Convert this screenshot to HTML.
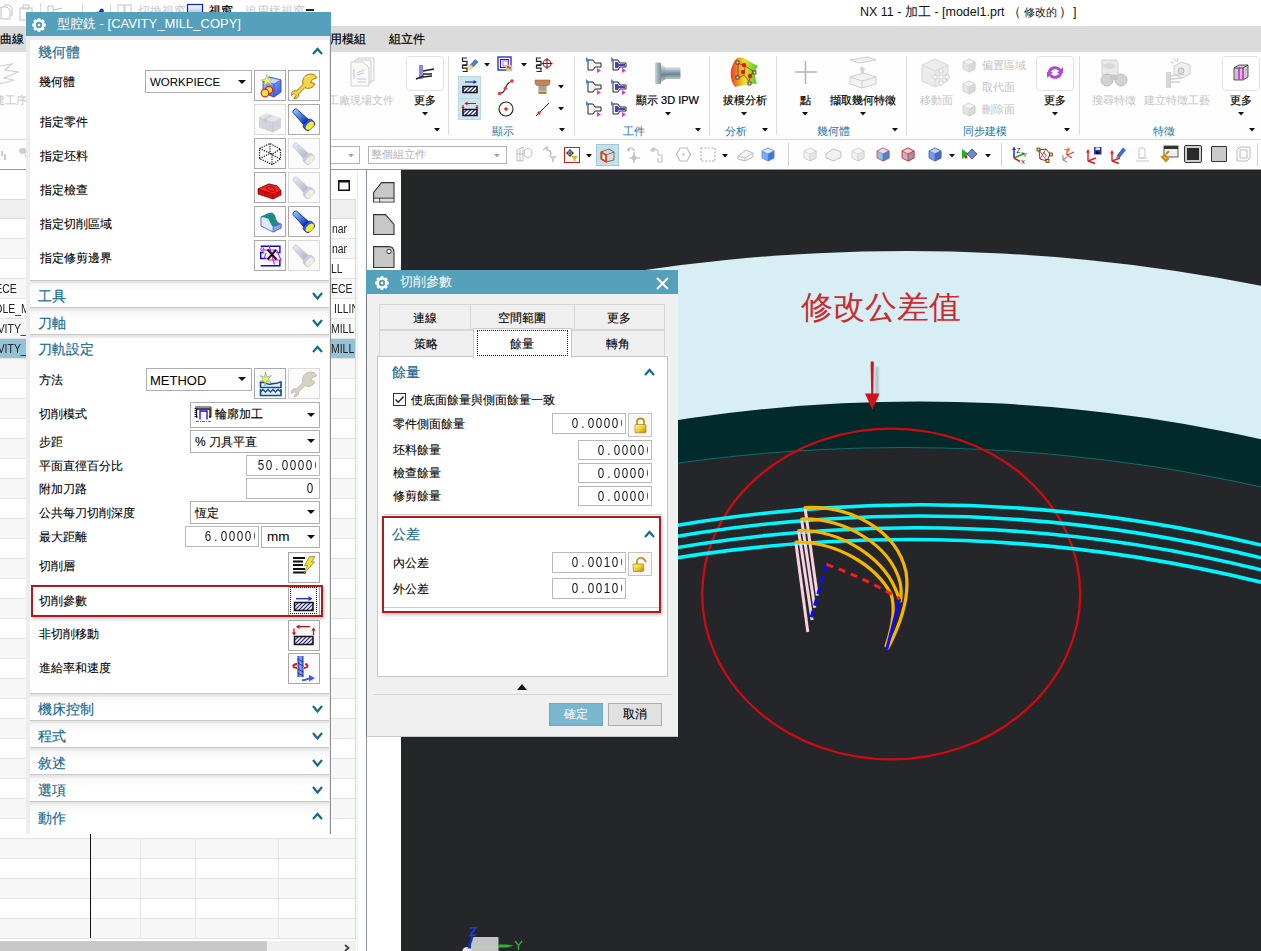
<!DOCTYPE html><html><head><meta charset="utf-8"><style>
*{box-sizing:border-box;margin:0;padding:0}
html,body{width:1261px;height:951px;overflow:hidden;background:#fff;font-family:"Liberation Sans",sans-serif;font-size:12px;color:#222;position:relative}
.a{position:absolute}
.t{position:absolute;white-space:nowrap;line-height:1}
svg{position:absolute;overflow:visible}
.hd{color:#156a90;font-size:13.5px;-webkit-text-stroke:0.15px #156a90}
.lb{font-size:12px;color:#000;-webkit-text-stroke:0.1px #000}
.dd{position:absolute;background:#fff;border:1px solid #adadad}
.tx{position:absolute;background:#fff;border:1px solid #b9b9b9;overflow:hidden}
.tx .cl{position:absolute;left:0;top:0;right:3px;bottom:0;overflow:hidden}.tx .ch{position:absolute;white-space:nowrap;line-height:1;font-size:14.2px;color:#151515}.tx .ch i{font-style:normal;display:inline-block;width:8.05px;text-align:center}.tx .ch i b{font-weight:normal;display:inline-block;transform:scaleX(0.82)}
.ib{position:absolute;width:32px;height:31px;border:1px solid #a9a9a9;background:#fbfbfb}
.ibd{border-color:#dadada}
.tri{position:absolute;width:0;height:0;border-left:4px solid transparent;border-right:4px solid transparent;border-top:4px solid #111}
.sep{position:absolute;background:#d0d0d0}
</style></head><body><svg style="left:0px;top:4px" width="14" height="18" viewBox="0 0 14 18" ><path d="M1 3 L7 3 L10 6 L10 15 L1 15 Z M4 1 L9 1 L12 4 L12 12" fill="none" stroke="#c0c0c0" stroke-width="1"/></svg><svg style="left:19px;top:4px" width="15" height="18" viewBox="0 0 15 18" ><rect x="1" y="4" width="12" height="12" fill="none" stroke="#c4c4c4"/><rect x="4" y="1" width="6" height="4" fill="none" stroke="#c4c4c4"/></svg><div class="a" style="left:40px;top:3px;width:1px;height:18px;background:#d8d8d8"></div><svg style="left:47px;top:4px" width="16" height="16" viewBox="0 0 16 16" ><path d="M1 2 L6 2 L6 14 L1 14 Z M7 6 L15 4 M7 9 L14 9" fill="none" stroke="#bdbdbd"/></svg><div class="a" style="left:82px;top:3px;width:1px;height:18px;background:#d8d8d8"></div><svg style="left:90px;top:4px" width="16" height="12" viewBox="0 0 16 12" ><path d="M1 10 L9 8" stroke="#b08040" stroke-width="1.5"/><path d="M9 9 C9 4 13 3 14 7 L12 10 Z" fill="#2030c0"/></svg><div class="a" style="left:110px;top:3px;width:1px;height:18px;background:#d8d8d8"></div><svg style="left:117px;top:3px" width="16" height="14" viewBox="0 0 16 14" ><rect x="1" y="2" width="6" height="10" fill="none" stroke="#c8c8c8"/><rect x="8" y="2" width="6" height="10" fill="none" stroke="#c8c8c8"/></svg><div class="t " style="left:138px;top:5px;font-size:12px;color:#c8c8c8">切換視窗</div><svg style="left:187px;top:4px" width="17" height="12" viewBox="0 0 17 12" ><rect x="0.5" y="0.5" width="15" height="11" fill="url(#wg)" stroke="#1020d0" stroke-width="1.2"/><defs><linearGradient id="wg" x1="0" y1="0" x2="0" y2="1"><stop offset="0" stop-color="#fff"/><stop offset="1" stop-color="#9ab4e0"/></linearGradient></defs></svg><div class="t " style="left:209px;top:5px;font-size:12px;color:#000;-webkit-text-stroke:0.2px #000">視窗</div><div class="t " style="left:245px;top:5px;font-size:12px;color:#c8c8c8">追用樣視窗</div><div class="a" style="left:306px;top:9px;width:8px;height:2px;background:#222"></div><div class="t " style="left:860px;top:6px;font-size:12.5px;color:#111">NX 11 - 加工 - [model1.prt</div><div class="t " style="left:1008px;top:6px;font-size:12.5px;color:#111">（</div><div class="t " style="left:1024px;top:6px;font-size:11px;color:#111;top:7px">修改的</div><div class="t " style="left:1059px;top:6px;font-size:12.5px;color:#111">）</div><div class="t " style="left:1073px;top:6px;font-size:12.5px;color:#111">]</div><div class="a" style="left:0px;top:26px;width:1261px;height:26px;background:#dbdbdb"></div><div class="t " style="left:0px;top:33px;font-size:12px;color:#000;-webkit-text-stroke:0.2px #000">曲線</div><div class="t " style="left:318px;top:33px;font-size:12px;color:#000;-webkit-text-stroke:0.2px #000">應用模組</div><div class="t " style="left:389px;top:33px;font-size:12px;color:#000;-webkit-text-stroke:0.2px #000">組立件</div><div class="a" style="left:0px;top:52px;width:1261px;height:87px;background:#fefefe"></div><div class="a" style="left:0px;top:139px;width:1261px;height:1px;background:#d9d9d9"></div><svg style="left:0px;top:60px" width="22" height="30" viewBox="0 0 22 30" ><path d="M0 6 L12 4 L5 10 L18 12 L4 18 L14 20 L0 24" fill="none" stroke="#cfcfcf" stroke-width="1.2"/></svg><div class="t " style="left:-6px;top:95px;font-size:11px;color:#c4c4c4">建工序</div><svg style="left:349px;top:57px" width="28" height="31" viewBox="0 0 28 31" ><g fill="#fafafa" stroke="#cdcdcd" stroke-width="1"><path d="M9 1 L25 1 L25 24 L9 24 Z"/><path d="M6 3 L22 3 L22 26 L6 26 Z"/><path d="M2 5 L14 5 L20 11 L20 29 L2 29 Z"/></g><path d="M5 12 L5 22 M8 16 L15 13 M8 18 L15 16 M8 22 L17 22 M8 25 L17 25" stroke="#c8c8d8" stroke-width="1.2"/></svg><div class="t " style="left:328px;top:95px;font-size:11px;color:#c4c4c4">工廠現場文件</div><div class="a" style="left:406px;top:56px;width:38px;height:35px;border:1px solid #e2e2e2;border-radius:4px;background:#fff"></div><svg style="left:412px;top:62px" width="26" height="22" viewBox="0 0 26 22" ><rect x="7" y="3" width="4" height="14" fill="#8a8ae0"/><path d="M4 17 L12 14 M11 9 L22 7 M11 12 L20 12 M11 15 L20 14" stroke="#222" stroke-width="1.5"/></svg><div class="t " style="left:414px;top:95px;font-size:11px;color:#000;-webkit-text-stroke:0.2px #000">更多</div><svg style="left:422px;top:112px" width="6" height="4" viewBox="0 0 6 4" ><path d="M0 0 L6 0 L3 3.5 Z" fill="#111"/></svg><svg style="left:434px;top:128px" width="6" height="4" viewBox="0 0 6 4" ><path d="M0 0 L6 0 L3 3.5 Z" fill="#111"/></svg><div class="a" style="left:448px;top:56px;width:1px;height:79px;background:#dcdcdc"></div><div class="a" style="left:458px;top:76px;width:23px;height:44px;background:#cfe5ee;border:1px solid #b8d8e4"></div><div class="a" style="left:459px;top:98px;width:21px;height:1px;background:#b8d8e4"></div><svg style="left:460px;top:77px" width="20" height="20" viewBox="0 0 20 20" ><rect x="3" y="9.5" width="14" height="6" fill="#fff"/><clipPath id="hc3"><rect x="3" y="9.5" width="14" height="6"/></clipPath><path d="M-3 15.5 L3 9.5M1 15.5 L7 9.5M5 15.5 L11 9.5M9 15.5 L15 9.5M13 15.5 L19 9.5M17 15.5 L23 9.5M21 15.5 L27 9.5" stroke="#2a2a90" stroke-width="1.1" clip-path="url(#hc3)"/><rect x="3" y="9.5" width="14" height="6" fill="none" stroke="#111" stroke-width="1.5"/><path d="M5 5 L15 5" stroke="#1a2ad0" stroke-width="1.2"/><path d="M13.5 3 L17 5 L13.5 7 Z" fill="#1a2ad0"/></svg><svg style="left:460px;top:99px" width="20" height="20" viewBox="0 0 20 20" ><rect x="3" y="10.5" width="14" height="6" fill="#fff"/><clipPath id="hc4"><rect x="3" y="10.5" width="14" height="6"/></clipPath><path d="M-3 16.5 L3 10.5M1 16.5 L7 10.5M5 16.5 L11 10.5M9 16.5 L15 10.5M13 16.5 L19 10.5M17 16.5 L23 10.5M21 16.5 L27 10.5" stroke="#2a2a90" stroke-width="1.1" clip-path="url(#hc4)"/><rect x="3" y="10.5" width="14" height="6" fill="none" stroke="#111" stroke-width="1.5"/><path d="M6 4.5 L16 4.5 M3 6 L3 9 M17 6 L17 9" stroke="#d01010" stroke-width="1.2"/><path d="M4.5 4.5 L7.5 2.5 L7.5 6.5 Z M1.3 8 L3 10.5 L4.7 8 Z M15.3 8 L17 10.5 L18.7 8 Z" fill="#d01010"/></svg><svg style="left:461px;top:57px" width="18" height="16" viewBox="0 0 18 16" ><path d="M6 1 L1.5 1 L1.5 4.3 L6 4.3 L6 7.8 L1.5 7.8 M6 8.3 L1.5 8.3 L1.5 11.2 L6 11.2 L6 14.5 L1.5 14.5" fill="none" stroke="#222" stroke-width="1.2"/><path d="M8 9.5 L14 2.5 L17 5 L10.5 11.5 Z" fill="#4a80e0" stroke="#2040a0" stroke-width="0.5"/><ellipse cx="9.5" cy="10.5" rx="2.2" ry="2.6" transform="rotate(45 9.5 10.5)" fill="#e8e070"/></svg><svg style="left:484px;top:63px" width="6" height="4" viewBox="0 0 6 4" ><path d="M0 0 L6 0 L3 3.5 Z" fill="#111"/></svg><svg style="left:497px;top:56px" width="17" height="17" viewBox="0 0 17 17" ><rect x="1" y="1" width="13" height="13" fill="none" stroke="#2020c0" stroke-width="1.3"/><rect x="3.5" y="3.5" width="8" height="8" fill="none" stroke="#2020c0"/><rect x="6" y="5" width="5" height="5" fill="#fff" stroke="#d060d0"/><circle cx="12" cy="12" r="3.5" fill="#e0c090"/><circle cx="11" cy="11" r="1" fill="#e02020"/><circle cx="13" cy="12" r="1" fill="#20a020"/></svg><svg style="left:521px;top:63px" width="6" height="4" viewBox="0 0 6 4" ><path d="M0 0 L6 0 L3 3.5 Z" fill="#111"/></svg><svg style="left:535px;top:57px" width="18" height="16" viewBox="0 0 18 16" ><path d="M6 1 L1.5 1 L1.5 4.3 L6 4.3 L6 7.8 L1.5 7.8 M6 8.3 L1.5 8.3 L1.5 11.2 L6 11.2 L6 14.5 L1.5 14.5" fill="none" stroke="#222" stroke-width="1.2"/><circle cx="12" cy="6.5" r="3.8" fill="none" stroke="#e01010" stroke-width="1.2"/><path d="M12 1 L12 12 M6.5 6.5 L17.5 6.5" stroke="#333" stroke-width="1"/></svg><svg style="left:497px;top:79px" width="18" height="17" viewBox="0 0 18 17" ><path d="M2.5 14.5 C5 14.5 7 13 8 10 C9 7 10 3.5 15 2" fill="none" stroke="#333" stroke-width="1.2"/><circle cx="2.5" cy="14.5" r="1.8" fill="#e04040"/><circle cx="8.3" cy="9.5" r="1.8" fill="#e04040"/><circle cx="15" cy="2" r="1.8" fill="#e04040"/></svg><svg style="left:534px;top:79px" width="17" height="17" viewBox="0 0 17 17" ><path d="M1 1 L16 1 L16 3 C16 6 14 7 12 7 L5 7 C3 7 1 6 1 3 Z" fill="#c8825a" stroke="#8a5030" stroke-width="0.5"/><rect x="4.5" y="7" width="8" height="6" fill="#a0a0a0"/><rect x="4.5" y="11.5" width="8" height="2" fill="#f0c020"/><rect x="4.5" y="13.5" width="8" height="1" fill="#222"/></svg><svg style="left:558px;top:85px" width="6" height="4" viewBox="0 0 6 4" ><path d="M0 0 L6 0 L3 3.5 Z" fill="#111"/></svg><svg style="left:498px;top:101px" width="17" height="17" viewBox="0 0 17 17" ><circle cx="8" cy="8" r="7" fill="none" stroke="#222" stroke-width="1.1"/><path d="M8 5.5 L9 7 L10.5 8 L9 9 L8 10.5 L7 9 L5.5 8 L7 7 Z" fill="#e03030"/></svg><svg style="left:535px;top:101px" width="16" height="17" viewBox="0 0 16 17" ><path d="M1 15 L14 2" stroke="#333" stroke-width="1"/><circle cx="4" cy="12" r="1.7" fill="#e03030"/></svg><svg style="left:558px;top:107px" width="6" height="4" viewBox="0 0 6 4" ><path d="M0 0 L6 0 L3 3.5 Z" fill="#111"/></svg><div class="t " style="left:492px;top:126px;font-size:11px;color:#1f76a0">顯示</div><svg style="left:559px;top:128px" width="6" height="4" viewBox="0 0 6 4" ><path d="M0 0 L6 0 L3 3.5 Z" fill="#111"/></svg><div class="a" style="left:574px;top:56px;width:1px;height:79px;background:#dcdcdc"></div><svg style="left:586px;top:57px" width="16" height="16" viewBox="0 0 16 16" ><path d="M2 3 L7 3 L9 6 L15 6 L15 10 L9 10 L7 13 L2 13 Z" fill="#fff" stroke="#222" stroke-width="1"/>
<path d="M4 5 L7 5 L8 7 L14 7 L14 9 L8 9 L7 11 L4 11 Z" fill="#e8e8e8" opacity="0.6"/>
<path d="M0 0 L3 2.5 L0 5 Z" fill="#3a90d8"/><path d="M11 11 L15 13.5 L11 16 Z" fill="#d040d8"/></svg><svg style="left:611px;top:57px" width="16" height="16" viewBox="0 0 16 16" ><path d="M2 3 L7 3 L9 6 L15 6 L15 10 L9 10 L7 13 L2 13 Z" fill="#fff" stroke="#222" stroke-width="1"/>
<path d="M4 5 L7 5 L8 7 L14 7 L14 9 L8 9 L7 11 L4 11 Z" fill="#4a3fb8" opacity="1"/>
<path d="M0 0 L3 2.5 L0 5 Z" fill="#3a90d8"/><path d="M11 11 L15 13.5 L11 16 Z" fill="#d040d8"/></svg><svg style="left:586px;top:79px" width="16" height="16" viewBox="0 0 16 16" ><path d="M2 3 L7 3 L9 6 L15 6 L15 10 L9 10 L7 13 L2 13 Z" fill="#fff" stroke="#222" stroke-width="1"/>
<path d="M4 5 L7 5 L8 7 L14 7 L14 9 L8 9 L7 11 L4 11 Z" fill="#e8e8e8" opacity="0.6"/>
<path d="M0 0 L3 2.5 L0 5 Z" fill="#3a90d8"/><path d="M11 11 L15 13.5 L11 16 Z" fill="#d040d8"/></svg><svg style="left:611px;top:79px" width="16" height="16" viewBox="0 0 16 16" ><path d="M2 3 L7 3 L9 6 L15 6 L15 10 L9 10 L7 13 L2 13 Z" fill="#fff" stroke="#222" stroke-width="1"/>
<path d="M4 5 L7 5 L8 7 L14 7 L14 9 L8 9 L7 11 L4 11 Z" fill="#4a3fb8" opacity="1"/>
<path d="M0 0 L3 2.5 L0 5 Z" fill="#3a90d8"/><path d="M11 11 L15 13.5 L11 16 Z" fill="#d040d8"/></svg><svg style="left:586px;top:101px" width="16" height="16" viewBox="0 0 16 16" ><path d="M2 3 L7 3 L9 6 L15 6 L15 10 L9 10 L7 13 L2 13 Z" fill="#fff" stroke="#222" stroke-width="1"/>
<path d="M4 5 L7 5 L8 7 L14 7 L14 9 L8 9 L7 11 L4 11 Z" fill="#e8e8e8" opacity="0.6"/>
<path d="M0 0 L3 2.5 L0 5 Z" fill="#3a90d8"/><path d="M11 11 L15 13.5 L11 16 Z" fill="#d040d8"/></svg><svg style="left:611px;top:101px" width="16" height="16" viewBox="0 0 16 16" ><path d="M2 3 L7 3 L9 6 L15 6 L15 10 L9 10 L7 13 L2 13 Z" fill="#fff" stroke="#222" stroke-width="1"/>
<path d="M4 5 L7 5 L8 7 L14 7 L14 9 L8 9 L7 11 L4 11 Z" fill="#4a3fb8" opacity="1"/>
<path d="M0 0 L3 2.5 L0 5 Z" fill="#3a90d8"/><path d="M11 11 L15 13.5 L11 16 Z" fill="#d040d8"/></svg><svg style="left:654px;top:62px" width="28" height="23" viewBox="0 0 28 23" ><defs><linearGradient id="ipw" x1="0" y1="0" x2="0" y2="1"><stop offset="0" stop-color="#e4eaee"/><stop offset=".35" stop-color="#9aacb6"/><stop offset=".6" stop-color="#6e828e"/><stop offset="1" stop-color="#b8c6ce"/></linearGradient><linearGradient id="ipw2" x1="0" y1="0" x2="1" y2="0"><stop offset="0" stop-color="#c8d4da"/><stop offset="1" stop-color="#7a8c96"/></linearGradient></defs><rect x="1" y="0.5" width="6" height="21.5" rx="1.5" fill="url(#ipw2)"/><path d="M7 2.5 L12 5.5 L12 17 L7 20 Z" fill="url(#ipw)"/><rect x="11.5" y="5" width="15" height="12" rx="1.5" fill="url(#ipw)"/></svg><div class="t " style="left:636px;top:95px;font-size:11px;color:#000;-webkit-text-stroke:0.2px #000">顯示 3D IPW</div><svg style="left:665px;top:112px" width="6" height="4" viewBox="0 0 6 4" ><path d="M0 0 L6 0 L3 3.5 Z" fill="#111"/></svg><div class="t " style="left:623px;top:126px;font-size:11px;color:#1f76a0">工件</div><svg style="left:695px;top:128px" width="6" height="4" viewBox="0 0 6 4" ><path d="M0 0 L6 0 L3 3.5 Z" fill="#111"/></svg><div class="a" style="left:709px;top:56px;width:1px;height:79px;background:#dcdcdc"></div><svg style="left:727px;top:56px" width="34" height="34" viewBox="0 0 34 34" ><defs><linearGradient id="dr" x1="0" y1="0" x2="1" y2="0"><stop offset="0" stop-color="#e84020"/><stop offset=".5" stop-color="#f0e020"/><stop offset="1" stop-color="#30d030"/></linearGradient></defs><path d="M10 2 C16 0 20 4 25 7 L31 10 C26 16 28 22 30 28 C22 27 14 30 8 31 C2 24 2 10 10 2 Z" fill="url(#dr)"/><path d="M11 7 L18 10 L17 19 L11 22 Z M18 10 L26 15 L22 25 L17 19" fill="none" stroke="#b02040" stroke-width="0.8"/><circle cx="17" cy="9" r="2.2" fill="#d02020"/><circle cx="16" cy="16" r="2.2" fill="#d02020"/><circle cx="23" cy="20" r="2.2" fill="#d02020"/><g fill="#f6f030" stroke="#402070" stroke-width="0.8"><rect x="9" y="5" width="3" height="3"/><rect x="9" y="20" width="3" height="3"/><rect x="26" y="15" width="3" height="3"/><rect x="21" y="26" width="3" height="3"/></g></svg><div class="t " style="left:723px;top:95px;font-size:11px;color:#000;-webkit-text-stroke:0.2px #000">拔模分析</div><svg style="left:741px;top:112px" width="6" height="4" viewBox="0 0 6 4" ><path d="M0 0 L6 0 L3 3.5 Z" fill="#111"/></svg><div class="t " style="left:725px;top:126px;font-size:11px;color:#1f76a0">分析</div><svg style="left:762px;top:128px" width="6" height="4" viewBox="0 0 6 4" ><path d="M0 0 L6 0 L3 3.5 Z" fill="#111"/></svg><div class="a" style="left:776px;top:56px;width:1px;height:79px;background:#dcdcdc"></div><svg style="left:794px;top:60px" width="24" height="25" viewBox="0 0 24 25" ><path d="M11.5 1 L11.5 24 M1 12 L23 12" stroke="#b4b4b4" stroke-width="1.6"/></svg><div class="t " style="left:800px;top:95px;font-size:11px;color:#000;-webkit-text-stroke:0.2px #000">點</div><svg style="left:802px;top:112px" width="6" height="4" viewBox="0 0 6 4" ><path d="M0 0 L6 0 L3 3.5 Z" fill="#111"/></svg><svg style="left:848px;top:56px" width="30" height="33" viewBox="0 0 30 33" ><path d="M2 4 L20 1 L28 4 L11 7 Z" fill="#f0f0f0" stroke="#d0d0d0"/><path d="M14 10 L11 14 L13 14 L13 19 L16 19 L16 14 L18 14 Z" fill="#d4d4d4"/><path d="M2 21 L16 17 L28 21 L28 28 L14 32 L2 28 Z" fill="#f2f2f2" stroke="#cfcfcf"/><path d="M2 21 L14 25 L28 21 M14 25 L14 32" fill="none" stroke="#d0d0d0"/></svg><div class="t " style="left:830px;top:95px;font-size:11px;color:#000;-webkit-text-stroke:0.2px #000">擷取幾何特徵</div><svg style="left:860px;top:112px" width="6" height="4" viewBox="0 0 6 4" ><path d="M0 0 L6 0 L3 3.5 Z" fill="#111"/></svg><div class="t " style="left:817px;top:126px;font-size:11px;color:#1f76a0">幾何體</div><svg style="left:892px;top:128px" width="6" height="4" viewBox="0 0 6 4" ><path d="M0 0 L6 0 L3 3.5 Z" fill="#111"/></svg><div class="a" style="left:906px;top:56px;width:1px;height:79px;background:#dcdcdc"></div><svg style="left:919px;top:57px" width="32" height="32" viewBox="0 0 32 32" ><path d="M3 8 L16 2 L29 8 L29 24 L16 30 L3 24 Z" fill="#ececec" stroke="#d6d6d6"/><path d="M3 8 L16 14 L29 8 M16 14 L16 30" fill="none" stroke="#dadada"/><path d="M22 11 L25 15 L23 15 L23 19 L27 19 L27 17 L31 20 L27 23 L27 21 L23 21 L23 25 L25 25 L22 29 L19 25 L21 25 L21 21 L17 21 L17 23 L13 20 L17 17 L17 19 L21 19 L21 15 L19 15 Z" fill="#fff" stroke="#cfcfcf"/></svg><div class="t " style="left:920px;top:95px;font-size:11px;color:#c4c4c4">移動面</div><svg style="left:961px;top:57px" width="16" height="16" viewBox="0 0 16 16" ><path d="M2 5 L8 2 L14 5 L14 12 L8 15 L2 12 Z" fill="#e4e4e4" stroke="#cfcfcf" stroke-width="0.8"/>
<path d="M2 5 L8 2 L14 5 L8 8 Z" fill="#f2f2f2" stroke="#cfcfcf" stroke-width="0.6"/>
<path d="M8 8 L14 5 L14 12 L8 15 Z" fill="#dadada" stroke="#cfcfcf" stroke-width="0.6"/></svg><div class="t " style="left:982px;top:60px;font-size:11px;color:#c4c4c4">偏置區域</div><svg style="left:961px;top:79px" width="16" height="16" viewBox="0 0 16 16" ><path d="M2 5 L8 2 L14 5 L14 12 L8 15 L2 12 Z" fill="#e4e4e4" stroke="#cfcfcf" stroke-width="0.8"/>
<path d="M2 5 L8 2 L14 5 L8 8 Z" fill="#f2f2f2" stroke="#cfcfcf" stroke-width="0.6"/>
<path d="M8 8 L14 5 L14 12 L8 15 Z" fill="#dadada" stroke="#cfcfcf" stroke-width="0.6"/></svg><div class="t " style="left:982px;top:82px;font-size:11px;color:#c4c4c4">取代面</div><svg style="left:961px;top:101px" width="16" height="16" viewBox="0 0 16 16" ><path d="M2 5 L8 2 L14 5 L14 12 L8 15 L2 12 Z" fill="#e4e4e4" stroke="#cfcfcf" stroke-width="0.8"/>
<path d="M2 5 L8 2 L14 5 L8 8 Z" fill="#f2f2f2" stroke="#cfcfcf" stroke-width="0.6"/>
<path d="M8 8 L14 5 L14 12 L8 15 Z" fill="#dadada" stroke="#cfcfcf" stroke-width="0.6"/></svg><div class="t " style="left:982px;top:104px;font-size:11px;color:#c4c4c4">刪除面</div><div class="t " style="left:963px;top:126px;font-size:11px;color:#1f76a0">同步建模</div><div class="a" style="left:1036px;top:56px;width:38px;height:35px;border:1px solid #e2e2e2;border-radius:4px;background:#fff"></div><svg style="left:1045px;top:63px" width="20" height="18" viewBox="0 0 20 18" ><path d="M3 9 C3 3 12 1 16 6 L18 4 L18 10 L12 10 L14 8 C11 5 7 6 6 9 Z M17 10 C17 16 8 18 4 13 L2 15 L2 9 L8 9 L6 11 C9 14 13 13 14 10 Z" fill="#b04ad8"/></svg><div class="t " style="left:1044px;top:95px;font-size:11px;color:#000;-webkit-text-stroke:0.2px #000">更多</div><svg style="left:1052px;top:112px" width="6" height="4" viewBox="0 0 6 4" ><path d="M0 0 L6 0 L3 3.5 Z" fill="#111"/></svg><svg style="left:1064px;top:128px" width="6" height="4" viewBox="0 0 6 4" ><path d="M0 0 L6 0 L3 3.5 Z" fill="#111"/></svg><div class="a" style="left:1079px;top:56px;width:1px;height:79px;background:#dcdcdc"></div><svg style="left:1096px;top:57px" width="33" height="32" viewBox="0 0 33 32" ><path d="M6 3 L20 3 L22 6 L22 18 L6 18 Z" fill="#eaeaea" stroke="#cfcfcf"/><ellipse cx="13" cy="9" rx="6" ry="3" fill="#d8d8d8"/><circle cx="11" cy="23" r="6" fill="#d2d2d2" stroke="#bdbdbd"/><circle cx="25" cy="23" r="6" fill="#d2d2d2" stroke="#bdbdbd"/><rect x="14" y="18" width="8" height="5" fill="#c8c8c8"/></svg><div class="t " style="left:1092px;top:95px;font-size:11px;color:#c4c4c4">搜尋特徵</div><svg style="left:1160px;top:56px" width="34" height="33" viewBox="0 0 34 33" ><path d="M14 10 L22 6 L30 9 L30 18 L22 22 L14 18 Z" fill="#efefef" stroke="#cfcfcf"/><circle cx="21" cy="15" r="3" fill="#dcdcdc" stroke="#bcbcbc"/><path d="M14 2 L16 6 M10 6 L14 7 M18 2 L17 6" stroke="#cfcfcf"/><rect x="6" y="16" width="5" height="16" fill="#d6d6d6"/><path d="M10 20 L24 18 M10 23 L22 22 M10 26 L20 26" stroke="#d0d0d0" stroke-width="1.3"/></svg><div class="t " style="left:1144px;top:95px;font-size:11px;color:#c4c4c4">建立特徵工藝</div><div class="t " style="left:1153px;top:126px;font-size:11px;color:#1f76a0">特徵</div><div class="a" style="left:1222px;top:56px;width:38px;height:35px;border:1px solid #e2e2e2;border-radius:4px;background:#fff"></div><svg style="left:1231px;top:64px" width="20" height="18" viewBox="0 0 20 18" ><path d="M3 4 L8 1 L17 1 L17 13 L12 16 L3 16 Z" fill="#c8c8c8" stroke="#333" stroke-width="0.8"/><path d="M8 4 L8 16 M12 4 L12 16" stroke="#e020e0" stroke-width="1.6"/><path d="M3 4 L12 4 L17 1" fill="none" stroke="#333" stroke-width="0.8"/></svg><div class="t " style="left:1230px;top:95px;font-size:11px;color:#000;-webkit-text-stroke:0.2px #000">更多</div><svg style="left:1238px;top:112px" width="6" height="4" viewBox="0 0 6 4" ><path d="M0 0 L6 0 L3 3.5 Z" fill="#111"/></svg><svg style="left:1249px;top:128px" width="6" height="4" viewBox="0 0 6 4" ><path d="M0 0 L6 0 L3 3.5 Z" fill="#111"/></svg><div class="a" style="left:0px;top:140px;width:1261px;height:29px;background:#fefefe"></div><div class="a" style="left:0px;top:169px;width:1261px;height:1px;background:#8e9a9e"></div><svg style="left:0px;top:146px" width="12" height="18" viewBox="0 0 12 18" ><path d="M2 5 L2 10 M5 8 L5 14" stroke="#c8c8c8" stroke-width="2"/></svg><svg style="left:17px;top:146px" width="18" height="18" viewBox="0 0 18 18" ><ellipse cx="6" cy="5" rx="4" ry="3" fill="#d0d0d0"/><path d="M8 9 L12 13 L12 16" stroke="#bdbdbd" stroke-width="1.3" fill="none"/></svg><div class="a" style="left:300px;top:146px;width:60px;height:18px;border:1px solid #b4b4b4;background:#fff"></div><svg style="left:348px;top:154px" width="6" height="4" viewBox="0 0 6 4" ><path d="M0 0 L6 0 L3 3.5 Z" fill="#a8a8a8"/></svg><div class="a" style="left:368px;top:146px;width:139px;height:18px;border:1px solid #b4b4b4;background:#fff"></div><div class="t " style="left:371px;top:149px;font-size:11px;color:#b4b4b4">整個組立件</div><svg style="left:494px;top:154px" width="6" height="4" viewBox="0 0 6 4" ><path d="M0 0 L6 0 L3 3.5 Z" fill="#a8a8a8"/></svg><svg style="left:516px;top:146px" width="18" height="17" viewBox="0 0 18 17" ><path d="M1 4 L7 1 L7 15 L1 15 Z M4 4 L4 15 M1 8 L7 8" fill="none" stroke="#bcbcbc" stroke-width="1"/><ellipse cx="12" cy="7" rx="4" ry="4.5" fill="none" stroke="#c4c4c4" stroke-width="1.2"/></svg><svg style="left:541px;top:146px" width="17" height="17" viewBox="0 0 17 17" ><path d="M2 4 L6 1 L6 4 C10 4 11 8 9 10" fill="none" stroke="#c0c0c0" stroke-width="1.5"/><path d="M8 10 L16 10 L13 13 L13 16 L11 16 L11 13 Z" fill="#cfcfcf"/></svg><div class="a" style="left:564px;top:147px;width:16px;height:16px;border:1px solid #d02020;background:#fff"></div><svg style="left:565px;top:148px" width="14" height="14" viewBox="0 0 14 14" ><circle cx="5" cy="5" r="2.5" fill="none" stroke="#222" stroke-width="0.9"/><path d="M5 1 L5 9 M1 5 L9 5" stroke="#222" stroke-width="0.9"/><path d="M6 8 L13 8 L10.5 11 L10.5 13 L8.5 13 L8.5 11 Z" fill="#f0b020"/></svg><svg style="left:586px;top:154px" width="6" height="4" viewBox="0 0 6 4" ><path d="M0 0 L6 0 L3 3.5 Z" fill="#111"/></svg><div class="a" style="left:596px;top:144px;width:23px;height:22px;background:#c5e0ea;border:1px solid #9ccbdc"></div><svg style="left:599px;top:147px" width="17" height="16" viewBox="0 0 17 16" ><path d="M2 5 L10 2 L15 5 L15 13 L7 15 L2 12 Z" fill="#dadada" stroke="#444" stroke-width="0.7"/><path d="M2 5 L7 8 L15 5 M7 8 L7 15" fill="none" stroke="#444" stroke-width="0.7"/><path d="M2.5 5.5 L7 8 L7 14.5 L2.5 12 Z" fill="#fff" stroke="#e04010" stroke-width="1.8"/></svg><svg style="left:625px;top:146px" width="17" height="18" viewBox="0 0 17 18" ><path d="M3 5 C3 1 9 1 9 5" fill="none" stroke="#b8b8b8" stroke-width="1.2"/><path d="M2 3 L4 6 L5 2 Z" fill="#b8b8b8"/><path d="M9 6 L9 17 M4 12 L15 12" stroke="#b8b8b8" stroke-width="1.2"/><circle cx="9" cy="12" r="2" fill="none" stroke="#b8b8b8"/></svg><svg style="left:649px;top:146px" width="16" height="18" viewBox="0 0 16 18" ><path d="M1 5 L5 2 L9 5 L9 9 L13 9 L13 16 L9 16 L9 12" fill="none" stroke="#c0c0c0" stroke-width="1.1"/><circle cx="4" cy="4" r="2" fill="#c8c8c8"/></svg><svg style="left:676px;top:147px" width="15" height="15" viewBox="0 0 15 15" ><path d="M4 1 L11 1 L14.5 7.5 L11 14 L4 14 L0.5 7.5 Z" fill="none" stroke="#bcbcbc" stroke-width="1.2"/><circle cx="7.5" cy="7.5" r="1" fill="#aaa"/></svg><svg style="left:700px;top:147px" width="16" height="16" viewBox="0 0 16 16" ><rect x="1" y="1" width="14" height="13" fill="none" stroke="#b0b0b0" stroke-width="1.2" stroke-dasharray="2 1.5"/></svg><svg style="left:722px;top:154px" width="6" height="4" viewBox="0 0 6 4" ><path d="M0 0 L6 0 L3 3.5 Z" fill="#111"/></svg><svg style="left:737px;top:147px" width="17" height="15" viewBox="0 0 17 15" ><path d="M1 9 L9 3 L16 6 L16 10 L8 14 L1 12 Z" fill="#f4f4f4" stroke="#bdbdbd"/><path d="M1 9 L8 11 L16 6 M8 11 L8 14" fill="none" stroke="#c4c4c4"/></svg><svg style="left:760px;top:146px" width="17" height="17" viewBox="0 0 17 17" ><path d="M2 5 L8 2 L14 5 L14 12 L8 15 L2 12 Z" fill="#7ab0f0" stroke="#5a8ad8" stroke-width="0.8"/>
<path d="M2 5 L8 2 L14 5 L8 8 Z" fill="#d9ecff" stroke="#5a8ad8" stroke-width="0.6"/>
<path d="M8 8 L14 5 L14 12 L8 15 Z" fill="#3a7ad8" stroke="#5a8ad8" stroke-width="0.6"/></svg><div class="a" style="left:788px;top:143px;width:1px;height:23px;background:#d0d0d0"></div><svg style="left:802px;top:146px" width="16" height="16" viewBox="0 0 16 16" ><path d="M2 5 L8 2 L14 5 L14 12 L8 15 L2 12 Z" fill="#f0f0f0" stroke="#c8c8c8" stroke-width="0.8"/>
<path d="M2 5 L8 2 L14 5 L8 8 Z" fill="#fafafa" stroke="#c8c8c8" stroke-width="0.6"/>
<path d="M8 8 L14 5 L14 12 L8 15 Z" fill="#e6e6e6" stroke="#c8c8c8" stroke-width="0.6"/></svg><svg style="left:825px;top:146px" width="17" height="16" viewBox="0 0 17 16" ><path d="M1 8 L8 3 L16 6 L16 11 L9 15 L1 12 Z" fill="#f2f2f2" stroke="#c0c0c0"/></svg><svg style="left:850px;top:146px" width="16" height="16" viewBox="0 0 16 16" ><path d="M2 5 L8 2 L14 5 L14 12 L8 15 L2 12 Z" fill="#f0f0f0" stroke="#c8c8c8" stroke-width="0.8"/>
<path d="M2 5 L8 2 L14 5 L8 8 Z" fill="#fafafa" stroke="#c8c8c8" stroke-width="0.6"/>
<path d="M8 8 L14 5 L14 12 L8 15 Z" fill="#e6e6e6" stroke="#c8c8c8" stroke-width="0.6"/></svg><svg style="left:875px;top:146px" width="16" height="16" viewBox="0 0 16 16" ><path d="M2 5 L8 2 L14 5 L14 12 L8 15 L2 12 Z" fill="#8cc4f8" stroke="#e04040" stroke-width="0.8"/>
<path d="M2 5 L8 2 L14 5 L8 8 Z" fill="#cfe6ff" stroke="#e04040" stroke-width="0.6"/>
<path d="M8 8 L14 5 L14 12 L8 15 Z" fill="#3a8ae0" stroke="#e04040" stroke-width="0.6"/></svg><svg style="left:900px;top:146px" width="16" height="16" viewBox="0 0 16 16" ><path d="M2 5 L8 2 L14 5 L14 12 L8 15 L2 12 Z" fill="#c8b0c0" stroke="#d01818" stroke-width="0.8"/>
<path d="M2 5 L8 2 L14 5 L8 8 Z" fill="#e8d0d8" stroke="#d01818" stroke-width="0.6"/>
<path d="M8 8 L14 5 L14 12 L8 15 Z" fill="#a890a8" stroke="#d01818" stroke-width="0.6"/></svg><svg style="left:927px;top:146px" width="16" height="16" viewBox="0 0 16 16" ><path d="M2 5 L8 2 L14 5 L14 12 L8 15 L2 12 Z" fill="#7a9ae8" stroke="#4a60a8" stroke-width="0.8"/>
<path d="M2 5 L8 2 L14 5 L8 8 Z" fill="#c0d0ff" stroke="#4a60a8" stroke-width="0.6"/>
<path d="M8 8 L14 5 L14 12 L8 15 Z" fill="#4a68c8" stroke="#4a60a8" stroke-width="0.6"/></svg><svg style="left:949px;top:154px" width="6" height="4" viewBox="0 0 6 4" ><path d="M0 0 L6 0 L3 3.5 Z" fill="#111"/></svg><svg style="left:961px;top:146px" width="17" height="16" viewBox="0 0 17 16" ><path d="M1 3 L8 8 L1 13 Z" fill="#20b020"/><path d="M6 8 L11 3 L16 8 L11 13 Z" fill="#6a8ad8" stroke="#333" stroke-width="0.7"/><circle cx="5" cy="11" r="1.5" fill="#d02020"/></svg><svg style="left:985px;top:154px" width="6" height="4" viewBox="0 0 6 4" ><path d="M0 0 L6 0 L3 3.5 Z" fill="#111"/></svg><div class="a" style="left:1001px;top:143px;width:1px;height:23px;background:#d0d0d0"></div><svg style="left:1010px;top:146px" width="18" height="18" viewBox="0 0 18 18" ><path d="M4 12 L4 2" stroke="#1a3ad8" stroke-width="1.6"/><path d="M2 4 L4 0.5 L6 4 Z" fill="#1a3ad8"/><path d="M4 12 L13 8" stroke="#2aa02a" stroke-width="1.6"/><path d="M11.5 6 L15 7.3 L12.5 10 Z" fill="#2aa02a"/><path d="M4 12 L10 15.5" stroke="#d02020" stroke-width="1.6"/><text x="6.5" y="6.5" font-size="6.5" font-family="Liberation Sans" fill="#111">Z</text><text x="13" y="11" font-size="6" font-family="Liberation Sans" fill="#111">Y</text><text x="11" y="18" font-size="6" font-family="Liberation Sans" fill="#111">X</text></svg><svg style="left:1036px;top:146px" width="18" height="18" viewBox="0 0 18 18" ><path d="M3 4 L10 3 L14 8 L11 15 L4 13 Z" fill="none" stroke="#b02040" stroke-width="1"/><path d="M3 4 L11 15 M10 3 L4 13 M7 6 C9 7 10 9 10 11" stroke="#b02040" stroke-width="0.8" fill="none"/><g fill="#f0e020" stroke="#222" stroke-width="0.7"><rect x="1" y="2" width="3" height="3"/><rect x="13.5" y="7" width="3" height="3"/><rect x="10" y="13.5" width="3" height="3"/></g></svg><svg style="left:1061px;top:146px" width="17" height="18" viewBox="0 0 17 18" ><path d="M6 9 L6 3 M6 9 L13 6 M6 9 L11 12" stroke="#e04020" stroke-width="1.2" fill="none"/><path d="M3 3.5 L8 3.5 M6.5 1.5 L8.5 3.5 L6.5 5.5" stroke="#f08030" stroke-width="1.2" fill="none"/><path d="M6 11 L2 14 M2 9 L2 14 L6 16" stroke="#909090" stroke-width="1.1" fill="none"/></svg><svg style="left:1085px;top:146px" width="17" height="18" viewBox="0 0 17 18" ><path d="M3 15 L3 5 M3 15 L11 12 M3 15 L10 17.5" stroke="#e02020" stroke-width="1.4"/><path d="M1 6.5 L3 3 L5 6.5 Z" fill="#e02020"/><rect x="9" y="1" width="7.5" height="7.5" fill="#2a3aa0"/><rect x="10.5" y="1.5" width="4.5" height="2.5" fill="#dfe6ff"/><rect x="11" y="5.5" width="3.5" height="2.5" fill="#111"/></svg><svg style="left:1109px;top:146px" width="17" height="18" viewBox="0 0 17 18" ><path d="M3 15 L3 6 M3 15 L11 12 M3 15 L10 17.5" stroke="#e02020" stroke-width="1.4"/><path d="M1 7.5 L3 4 L5 7.5 Z" fill="#e02020"/><path d="M8 10 L14 2 L16.5 4 L10.5 11.5 Z" fill="#3a70e0" stroke="#1a40a0" stroke-width="0.6"/><path d="M7 12.5 L8 10 L10.5 11.5 Z" fill="#888"/></svg><svg style="left:1135px;top:146px" width="15" height="18" viewBox="0 0 15 18" ><rect x="4" y="2" width="6" height="10" rx="2" fill="none" stroke="#c8c8c8"/><path d="M1 15 L14 15 M3 12 L12 12" stroke="#c8c8c8"/></svg><svg style="left:1160px;top:145px" width="19" height="19" viewBox="0 0 19 19" ><rect x="4" y="1" width="14" height="11" fill="#f0f0f0" stroke="#333" stroke-width="0.8"/><rect x="4" y="1" width="14" height="3" fill="#333"/><path d="M2 12 L6 16 L8 14 L5 10 Z M6 9 L9 6" stroke="#c09020" stroke-width="2" fill="#f0c030"/></svg><div class="a" style="left:1185px;top:146px;width:16px;height:16px;background:#2a2a2a;border:2px solid #cfcfcf;outline:1px solid #333;border-radius:1px"></div><div class="a" style="left:1211px;top:146px;width:16px;height:16px;background:#cacaca;border:1.5px solid #333;border-radius:1px"></div><svg style="left:1236px;top:146px" width="15" height="17" viewBox="0 0 15 17" ><path d="M1 4 L4 1 L14 1 L14 12 L11 15 L1 15 Z" fill="none" stroke="#bcbcbc"/><rect x="4" y="4" width="7" height="8" fill="none" stroke="#bcbcbc"/></svg><div class="a" style="left:1257px;top:143px;width:1px;height:23px;background:#d0d0d0"></div><div class="a" style="left:0px;top:170px;width:357px;height:781px;background:#fff"></div><svg style="left:338px;top:180px" width="12" height="11" viewBox="0 0 12 11" ><rect x="0.75" y="0.75" width="10.5" height="9.5" fill="#fff" stroke="#111" stroke-width="1.5"/><rect x="0" y="0" width="12" height="2.5" fill="#111"/></svg><div class="a" style="left:0px;top:199px;width:356px;height:20px;background:#efefef;border-top:1px solid #dcdcdc;border-bottom:1px solid #d9d9d9"></div><div class="a" style="left:0px;top:219px;width:355px;height:20px;background:#ffffff;border-bottom:1px solid #e3e3e3"></div><div class="a" style="left:0px;top:239px;width:355px;height:20px;background:#f7f7f7;border-bottom:1px solid #e3e3e3"></div><div class="a" style="left:0px;top:259px;width:355px;height:20px;background:#ffffff;border-bottom:1px solid #e3e3e3"></div><div class="a" style="left:0px;top:279px;width:355px;height:20px;background:#f7f7f7;border-bottom:1px solid #e3e3e3"></div><div class="a" style="left:0px;top:299px;width:355px;height:20px;background:#ffffff;border-bottom:1px solid #e3e3e3"></div><div class="a" style="left:0px;top:319px;width:355px;height:20px;background:#f7f7f7;border-bottom:1px solid #e3e3e3"></div><div class="a" style="left:0px;top:339px;width:355px;height:20px;background:#ffffff;border-bottom:1px solid #e3e3e3"></div><div class="a" style="left:0px;top:359px;width:355px;height:20px;background:#f7f7f7;border-bottom:1px solid #e3e3e3"></div><div class="a" style="left:0px;top:379px;width:355px;height:20px;background:#ffffff;border-bottom:1px solid #e3e3e3"></div><div class="a" style="left:0px;top:399px;width:355px;height:20px;background:#f7f7f7;border-bottom:1px solid #e3e3e3"></div><div class="a" style="left:0px;top:419px;width:355px;height:20px;background:#ffffff;border-bottom:1px solid #e3e3e3"></div><div class="a" style="left:0px;top:439px;width:355px;height:20px;background:#f7f7f7;border-bottom:1px solid #e3e3e3"></div><div class="a" style="left:0px;top:459px;width:355px;height:20px;background:#ffffff;border-bottom:1px solid #e3e3e3"></div><div class="a" style="left:0px;top:479px;width:355px;height:20px;background:#f7f7f7;border-bottom:1px solid #e3e3e3"></div><div class="a" style="left:0px;top:499px;width:355px;height:20px;background:#ffffff;border-bottom:1px solid #e3e3e3"></div><div class="a" style="left:0px;top:519px;width:355px;height:20px;background:#f7f7f7;border-bottom:1px solid #e3e3e3"></div><div class="a" style="left:0px;top:539px;width:355px;height:20px;background:#ffffff;border-bottom:1px solid #e3e3e3"></div><div class="a" style="left:0px;top:559px;width:355px;height:20px;background:#f7f7f7;border-bottom:1px solid #e3e3e3"></div><div class="a" style="left:0px;top:579px;width:355px;height:20px;background:#ffffff;border-bottom:1px solid #e3e3e3"></div><div class="a" style="left:0px;top:599px;width:355px;height:20px;background:#f7f7f7;border-bottom:1px solid #e3e3e3"></div><div class="a" style="left:0px;top:619px;width:355px;height:20px;background:#ffffff;border-bottom:1px solid #e3e3e3"></div><div class="a" style="left:0px;top:639px;width:355px;height:20px;background:#f7f7f7;border-bottom:1px solid #e3e3e3"></div><div class="a" style="left:0px;top:659px;width:355px;height:20px;background:#ffffff;border-bottom:1px solid #e3e3e3"></div><div class="a" style="left:0px;top:679px;width:355px;height:20px;background:#f7f7f7;border-bottom:1px solid #e3e3e3"></div><div class="a" style="left:0px;top:699px;width:355px;height:20px;background:#ffffff;border-bottom:1px solid #e3e3e3"></div><div class="a" style="left:0px;top:719px;width:355px;height:20px;background:#f7f7f7;border-bottom:1px solid #e3e3e3"></div><div class="a" style="left:0px;top:739px;width:355px;height:20px;background:#ffffff;border-bottom:1px solid #e3e3e3"></div><div class="a" style="left:0px;top:759px;width:355px;height:20px;background:#f7f7f7;border-bottom:1px solid #e3e3e3"></div><div class="a" style="left:0px;top:779px;width:355px;height:20px;background:#ffffff;border-bottom:1px solid #e3e3e3"></div><div class="a" style="left:0px;top:799px;width:355px;height:20px;background:#f7f7f7;border-bottom:1px solid #e3e3e3"></div><div class="a" style="left:0px;top:819px;width:355px;height:20px;background:#ffffff;border-bottom:1px solid #e3e3e3"></div><div class="a" style="left:0px;top:839px;width:355px;height:20px;background:#f7f7f7;border-bottom:1px solid #e3e3e3"></div><div class="a" style="left:0px;top:859px;width:355px;height:20px;background:#ffffff;border-bottom:1px solid #e3e3e3"></div><div class="a" style="left:0px;top:879px;width:355px;height:20px;background:#f7f7f7;border-bottom:1px solid #e3e3e3"></div><div class="a" style="left:0px;top:899px;width:355px;height:20px;background:#ffffff;border-bottom:1px solid #e3e3e3"></div><div class="a" style="left:0px;top:919px;width:355px;height:20px;background:#f7f7f7;border-bottom:1px solid #e3e3e3"></div><div class="a" style="left:355px;top:199px;width:1px;height:741px;background:#d6d6d6"></div><div class="a" style="left:140px;top:838px;width:1px;height:100px;background:#e6e6e6"></div><div class="a" style="left:195px;top:838px;width:1px;height:100px;background:#e6e6e6"></div><div class="a" style="left:278px;top:838px;width:1px;height:100px;background:#e6e6e6"></div><div class="a" style="left:0px;top:339px;width:355px;height:19px;background:#93c3d6"></div><div class="a" style="left:331px;top:218px;width:24px;height:20px;overflow:hidden"><div class="t" style="left:0.5px;top:5px;font-size:12px;color:#222;transform:scaleX(0.87);transform-origin:0 50%">nar</div></div><div class="a" style="left:331px;top:238px;width:24px;height:20px;overflow:hidden"><div class="t" style="left:0.5px;top:5px;font-size:12px;color:#222;transform:scaleX(0.87);transform-origin:0 50%">nar</div></div><div class="a" style="left:331px;top:258px;width:24px;height:20px;overflow:hidden"><div class="t" style="left:-0.5px;top:5px;font-size:12px;color:#222;transform:scaleX(0.87);transform-origin:0 50%">LL</div></div><div class="t" style="right:1244px;top:283px;font-size:12px;color:#222;transform:scaleX(0.87);transform-origin:100% 50%">ECE</div><div class="a" style="left:331px;top:278px;width:24px;height:20px;overflow:hidden"><div class="t" style="left:-0.5px;top:5px;font-size:12px;color:#222;transform:scaleX(0.87);transform-origin:0 50%">ECE</div></div><div class="t" style="right:1231.5px;top:303px;font-size:12px;color:#222;transform:scaleX(0.87);transform-origin:100% 50%">OLE_M</div><div class="a" style="left:331px;top:298px;width:24px;height:20px;overflow:hidden"><div class="t" style="left:2.5px;top:5px;font-size:12px;color:#222;transform:scaleX(0.87);transform-origin:0 50%">ILLIN</div></div><div class="t" style="right:1225.5px;top:323px;font-size:12px;color:#222;transform:scaleX(0.87);transform-origin:100% 50%">VITY_M</div><div class="a" style="left:331px;top:318px;width:24px;height:20px;overflow:hidden"><div class="t" style="left:-0.5px;top:5px;font-size:12px;color:#222;transform:scaleX(0.87);transform-origin:0 50%">MILL</div></div><div class="t" style="right:1225.5px;top:343px;font-size:12px;color:#222;transform:scaleX(0.87);transform-origin:100% 50%">VITY_M</div><div class="a" style="left:331px;top:338px;width:24px;height:20px;overflow:hidden"><div class="t" style="left:-0.5px;top:5px;font-size:12px;color:#222;transform:scaleX(0.87);transform-origin:0 50%">MILL</div></div><div class="a" style="left:90px;top:834px;width:1.2px;height:104px;background:#111"></div><div class="a" style="left:0px;top:941px;width:356px;height:10px;background:#f0f0f0"></div><div class="a" style="left:0px;top:941px;width:267px;height:10px;background:#c8c8c8"></div><svg style="left:344px;top:944px" width="6" height="9" viewBox="0 0 6 9" ><path d="M1 1 L4.5 4 L1 7" fill="none" stroke="#444" stroke-width="1.8"/></svg><div class="a" style="left:357px;top:170px;width:1px;height:781px;background:#ececec"></div><div class="a" style="left:366px;top:170px;width:1px;height:781px;background:#8a9598"></div><div class="a" style="left:367px;top:170px;width:34px;height:781px;background:#fff"></div><svg style="left:373px;top:182px" width="23" height="22" viewBox="0 0 23 22" ><path d="M0.6 10.5 L8.5 0.6 L21 0.6 L21 20 L0.6 20 Z" fill="#c8c8c8" stroke="#333" stroke-width="1.1"/><path d="M0.6 16.2 L21 16.2 M6.8 16.2 L6.8 20" stroke="#333" stroke-width="1"/><rect x="1.2" y="16.8" width="5" height="2.7" fill="#ececec"/><rect x="7.4" y="16.8" width="13" height="2.7" fill="#dedede"/></svg><svg style="left:373px;top:214px" width="23" height="22" viewBox="0 0 23 22" ><path d="M0.6 0.6 L12.5 0.6 L21 10.5 L21 20.5 L0.6 20.5 Z" fill="#c8c8c8" stroke="#333" stroke-width="1.1"/></svg><svg style="left:373px;top:246px" width="23" height="23" viewBox="0 0 23 23" ><path d="M0.6 0.6 L15.5 0.6 C19 0.6 21 3 21 6.5 L21 21.5 L0.6 21.5 Z" fill="#c8c8c8" stroke="#333" stroke-width="1.1"/><circle cx="16" cy="5.5" r="2.2" fill="#fff" stroke="#333" stroke-width="1"/></svg><div class="a" style="left:401px;top:170px;width:860px;height:781px;background:#25262a;overflow:hidden">
<svg width="860" height="781" viewBox="401 170 860 781" style="left:0;top:0">
<circle cx="907" cy="2072" r="1821" fill="#d8eef5"/>
<circle cx="919" cy="1967" r="1565.6" fill="#022a2b"/>
<circle cx="903" cy="2094" r="1647" fill="#0f6a6d"/>
<circle cx="903" cy="2094" r="1646" fill="#25262a"/>
<text x="800.5" y="318" font-family="Liberation Serif,serif" font-size="32" fill="#cc2a30">修改公差值</text>
<defs><filter id="ash" x="-2" y="-1" width="5" height="3"><feGaussianBlur stdDeviation="1.3"/></filter></defs><rect x="875.5" y="367" width="3" height="34" fill="#000" opacity="0.22" filter="url(#ash)"/><path d="M870.6 361.5 L873.8 361.5 L873.3 394 L871.2 394 Z" fill="#cc141a"/>
<path d="M865 393.5 L879.5 393.5 L872.3 409.5 Z" fill="#cc141a"/>
<ellipse cx="891.2" cy="594" rx="189" ry="165.4" fill="none" stroke="#d20a0e" stroke-width="2.3"/>
<g fill="none" stroke="#00f6ff" stroke-width="3.6" transform="translate(0 0.8)">
<path d="M401 600.0 A1456.7 1456.7 0 0 1 1261 544.3"/>
<path d="M401 611.6 A1433.4 1433.4 0 0 1 1261 557.0"/>
<path d="M401 621.8 A1442.5 1442.5 0 0 1 1261 569.0"/>
<path d="M401 628.2 A1482.5 1482.5 0 0 1 1261 581.4"/>
</g>
<g fill="none" stroke="#f6d3df" stroke-width="3" stroke-linecap="butt">
<path d="M805.2 508.9 L817.3 595.6"/><path d="M801.7 520.2 L814.7 607.8"/><path d="M798.7 531.4 L812.1 620"/><path d="M796 543.6 L807.8 632"/>
</g>
<g fill="none" stroke="#f7b500" stroke-width="3.2" stroke-linecap="round">
<path d="M805 507.5 C850 505 897 530 906 572 C910 596 900 625 888 648"/>
<path d="M801.7 519 C845 518 890 545 900 582 C902 592 901 598 900.5 601"/>
<path d="M798.7 530.5 C842 530 882 558 895 588 C898 595 899.5 599 900 601"/>
<path d="M796 542 C838 542 876 566 891 594 C895 606 893 625 886 646"/>
</g>
<path d="M899.7 599 L886.7 649.4" stroke="#0a0aff" stroke-width="3"/>
<path d="M826.5 564.4 L810.4 620" stroke="#0a0aff" stroke-width="3" stroke-dasharray="7 5"/>
<path d="M826.5 564.4 Q865 578 900 599" fill="none" stroke="#ff1a1a" stroke-width="3" stroke-dasharray="7 6"/>
</g>
<rect x="471" y="937" width="27.5" height="16" rx="1" fill="#c4c4c4"/>
<rect x="471" y="946" width="27.5" height="2" fill="#b8d0b8"/>
<ellipse cx="467" cy="951" rx="4.5" ry="4" fill="#e8e8e8"/>
<path d="M468.5 948.5 L472.5 937" stroke="#1030e8" stroke-width="2.2"/>
<path d="M469.5 928 L476 927.5 L470 935.5 L476 935" fill="none" stroke="#1a3cf0" stroke-width="1.5"/>
<path d="M498.5 944.5 L507 944.5 L514 945.5 L507 947.5 L498.5 947.5 Z" fill="#2fb52f"/>
<path d="M515 941 L518.5 945.5 L522 941 M518.5 945.5 L518.5 950" fill="none" stroke="#2fb52f" stroke-width="1.3"/>
</svg>
</div><div class="a" style="left:26px;top:12px;width:305px;height:822px;background:#ededed"></div><div class="a" style="left:330px;top:12px;width:1px;height:822px;background:#8e8e8e"></div><div class="a" style="left:26px;top:12px;width:305px;height:24px;background:#55a0bb"></div><svg style="left:0;top:0" width="1261" height="951"><polygon points="37.10,19.95 37.83,18.20 40.17,18.20 40.90,19.95 41.23,20.08 42.98,19.37 44.63,21.02 43.92,22.77 44.05,23.10 45.80,23.83 45.80,26.17 44.05,26.90 43.92,27.23 44.63,28.98 42.98,30.63 41.23,29.92 40.90,30.05 40.17,31.80 37.83,31.80 37.10,30.05 36.77,29.92 35.02,30.63 33.37,28.98 34.08,27.23 33.95,26.90 32.20,26.17 32.20,23.83 33.95,23.10 34.08,22.77 33.37,21.02 35.02,19.37 36.77,20.08" fill="#fff"/><circle cx="39" cy="25" r="3.2" fill="#55a0bb"/><rect x="37.9" y="23.9" width="2.2" height="2.2" fill="#fff"/></svg><div class="t " style="left:57px;top:17px;font-size:13px;color:#fff">型腔銑 - [CAVITY_MILL_COPY]</div><div class="a" style="left:30px;top:40px;width:299px;height:240px;background:#fff"></div><div class="a" style="left:30px;top:280px;width:299px;height:1px;background:#c9c9c9"></div><div class="a" style="left:30px;top:281px;width:299px;height:3px;background:linear-gradient(#e0e0e0,#f0f0f0)"></div><div class="t hd" style="left:38px;top:46px;">幾何體</div><svg style="left:312px;top:47px" width="11" height="8" viewBox="0 0 11 8" ><path d="M1 7 L5.5 2 L10 7" fill="none" stroke="#176a8c" stroke-width="2.2"/></svg><div class="t lb" style="left:39px;top:76px;">幾何體</div><div class="dd" style="left:145px;top:70px;width:107px;height:23px;"></div><div class="t lb" style="left:150px;top:77px;font-size:11.5px;-webkit-text-stroke:0">WORKPIECE</div><div class="tri" style="left:238px;top:80px;border-left-width:4px;border-right-width:4px;border-top:4px solid #111"></div><div class="ib" style="left:254px;top:70px;width:32px;height:31px"></div><svg style="left:254px;top:70px" width="32" height="31" viewBox="0 0 32 31" ><defs><linearGradient id="gcb" x1="0" y1="0" x2="1" y2="1"><stop offset="0" stop-color="#a9c4ff"/><stop offset="1" stop-color="#3556d6"/></linearGradient></defs>
<path d="M9 11 L15 7 L27 10 L27 22 L20 27 L9 23 Z" fill="url(#gcb)" stroke="#2a3fb5" stroke-width="0.8"/>
<path d="M9 11 L15 7 L27 10 L20 14 Z" fill="#c9dafc" stroke="#2a3fb5" stroke-width="0.6"/>
<path d="M20 14 L20 27" stroke="#2a3fb5" stroke-width="0.6"/>
<path d="M13 4 L14.5 9 L19 8 L15.5 11 L18 15 L13.5 12.5 L10 16 L11 11.5 L7 10 L11.5 9 Z" fill="#fff34a" stroke="#6ab0d0" stroke-width="0.5"/>
<circle cx="15" cy="20" r="3.6" fill="#f9e24b" stroke="#e81c1c" stroke-width="1.2"/>
<circle cx="11" cy="23" r="3.8" fill="#f9e24b" stroke="#e81c1c" stroke-width="1.2"/></svg><div class="ib" style="left:288px;top:70px;width:32px;height:31px"></div><svg style="left:288px;top:70px" width="32" height="31" viewBox="0 0 32 31" ><path d="M19 5 C23 3 28 4 28.5 8 L24.5 9.5 L22.5 12.5 L26.5 13.5 C26 18 20 19.5 17 17.5 L10.5 24 C11.5 27 8.5 29 6 28.5 L8 25.5 L6 23.5 L3.5 25.5 C3 22.5 5 20 8.5 21 L15 14.5 C14 10.5 15.5 6.5 19 5 Z" fill="#f5d445" stroke="#a87a08" stroke-width="1"/><path d="M17 8 C18 7 20 6.5 22 6.5" stroke="#fff8c0" stroke-width="1.2" fill="none"/></svg><div class="t lb" style="left:40px;top:116px;">指定零件</div><div class="ib ibd" style="left:254px;top:104px;width:32px;height:31px"></div><svg style="left:254px;top:104px" width="32" height="31" viewBox="0 0 32 31" ><path d="M5 13 L12 9.5 L27 14 L27 24 L19 28.5 L5 23.5 Z" fill="#d2d4dc"/>
<path d="M5 13 L12 9.5 L16 10.7 L9.5 14.3 L13 15.4 L19.5 11.8 L27 14 L19 18 Z" fill="#e4e6ec"/>
<path d="M9.5 14.3 L9.5 17.5 L13 18.6 L13 15.4" fill="#c4c6ce"/>
<path d="M19 18 L19 28.5" stroke="#c0c2ca" stroke-width="0.8"/></svg><div class="ib" style="left:288px;top:104px;width:32px;height:31px"></div><svg style="left:288px;top:104px" width="32" height="31" viewBox="0 0 32 31" ><defs><linearGradient id="fl0" x1="0" y1="0" x2="1" y2="0" gradientTransform="rotate(45 .5 .5)"><stop offset="0" stop-color="#80c0ff"/><stop offset="1" stop-color="#1230b0"/></linearGradient></defs>
<path d="M5 8.5 C4.5 6.5 6.5 4.5 8.5 5 L20.5 15.5 L15.5 20.5 Z" fill="url(#fl0)" stroke="#0a1a90" stroke-width="0.8"/>
<path d="M15.5 20.5 L20.5 15.5 C23 14 27.5 18 26.5 21 L21 26.5 C18 27.5 14 23 15.5 20.5 Z" fill="#2a5ae8" stroke="#0a1a90" stroke-width="0.8"/>
<ellipse cx="21.8" cy="21.8" rx="5" ry="2.9" transform="rotate(-45 21.8 21.8)" fill="#f6ee20"/></svg><div class="t lb" style="left:40px;top:150px;">指定坯料</div><div class="ib" style="left:254px;top:138px;width:32px;height:31px"></div><svg style="left:254px;top:138px" width="32" height="31" viewBox="0 0 32 31" ><g fill="none" stroke="#111" stroke-width="1.1" stroke-dasharray="1.3 1.1">
<path d="M5.5 10.5 L16 5.5 L26.5 11 L26.5 21 L18 26.5 L5.5 20.5 Z"/><path d="M5.5 10.5 L18 16 L26.5 11"/><path d="M18 16 L18 26.5"/><path d="M16 5.5 L16 15.5 M5.5 20.5 L16 15.5 L26.5 21"/></g></svg><div class="ib ibd" style="left:288px;top:138px;width:32px;height:31px"></div><svg style="left:288px;top:138px" width="32" height="31" viewBox="0 0 32 31" ><defs><linearGradient id="fl1" x1="0" y1="0" x2="1" y2="0" gradientTransform="rotate(45 .5 .5)"><stop offset="0" stop-color="#e2e4ee"/><stop offset="1" stop-color="#b4b8cc"/></linearGradient></defs>
<path d="M5 8.5 C4.5 6.5 6.5 4.5 8.5 5 L20.5 15.5 L15.5 20.5 Z" fill="url(#fl1)" stroke="#c4c8d8" stroke-width="0.8"/>
<path d="M15.5 20.5 L20.5 15.5 C23 14 27.5 18 26.5 21 L21 26.5 C18 27.5 14 23 15.5 20.5 Z" fill="#c8cce0" stroke="#c4c8d8" stroke-width="0.8"/>
<ellipse cx="21.8" cy="21.8" rx="5" ry="2.9" transform="rotate(-45 21.8 21.8)" fill="#eef0d8"/></svg><div class="t lb" style="left:40px;top:184px;">指定檢查</div><div class="ib" style="left:254px;top:172px;width:32px;height:31px"></div><svg style="left:254px;top:172px" width="32" height="31" viewBox="0 0 32 31" ><path d="M4 17 L15 12 L23 14 L27 19 L27 23 L19 27 L4 22 Z" fill="#d80c10" stroke="#700000" stroke-width="0.7"/>
<path d="M4 17 L15 12 L23 14 L27 19 L19 22 Z" fill="#ff2424" stroke="#700000" stroke-width="0.6"/>
<path d="M19 22 L19 27 M11 20 L11 24" stroke="#700000" stroke-width="0.6"/>
<ellipse cx="17" cy="17" rx="4.5" ry="2" transform="rotate(20 17 17)" fill="none" stroke="#800000" stroke-width="0.9"/></svg><div class="ib ibd" style="left:288px;top:172px;width:32px;height:31px"></div><svg style="left:288px;top:172px" width="32" height="31" viewBox="0 0 32 31" ><defs><linearGradient id="fl1" x1="0" y1="0" x2="1" y2="0" gradientTransform="rotate(45 .5 .5)"><stop offset="0" stop-color="#e2e4ee"/><stop offset="1" stop-color="#b4b8cc"/></linearGradient></defs>
<path d="M5 8.5 C4.5 6.5 6.5 4.5 8.5 5 L20.5 15.5 L15.5 20.5 Z" fill="url(#fl1)" stroke="#c4c8d8" stroke-width="0.8"/>
<path d="M15.5 20.5 L20.5 15.5 C23 14 27.5 18 26.5 21 L21 26.5 C18 27.5 14 23 15.5 20.5 Z" fill="#c8cce0" stroke="#c4c8d8" stroke-width="0.8"/>
<ellipse cx="21.8" cy="21.8" rx="5" ry="2.9" transform="rotate(-45 21.8 21.8)" fill="#eef0d8"/></svg><div class="t lb" style="left:40px;top:218px;">指定切削區域</div><div class="ib" style="left:254px;top:206px;width:32px;height:31px"></div><svg style="left:254px;top:206px" width="32" height="31" viewBox="0 0 32 31" ><path d="M7 11 L7 20 L19 26 L27 22 L27 18 C24 17 23 16 22 14 C21 10 20 7 17 7 Z" fill="#dcecf7" stroke="#3a50e0" stroke-width="0.8"/>
<path d="M7 11 C10 9 13 7 17 7 C20 7 21 10 22 14 C23 16 24 17 27 18 L19 21 C17 19 16 16 15 14 C14 12 12 12 7 11 Z" fill="#1f8a88"/>
<path d="M19 21 L27 18 L27 22 L19 26 Z" fill="#8fa8e8" stroke="#3a50e0" stroke-width="0.6"/></svg><div class="ib" style="left:288px;top:206px;width:32px;height:31px"></div><svg style="left:288px;top:206px" width="32" height="31" viewBox="0 0 32 31" ><defs><linearGradient id="fl0" x1="0" y1="0" x2="1" y2="0" gradientTransform="rotate(45 .5 .5)"><stop offset="0" stop-color="#80c0ff"/><stop offset="1" stop-color="#1230b0"/></linearGradient></defs>
<path d="M5 8.5 C4.5 6.5 6.5 4.5 8.5 5 L20.5 15.5 L15.5 20.5 Z" fill="url(#fl0)" stroke="#0a1a90" stroke-width="0.8"/>
<path d="M15.5 20.5 L20.5 15.5 C23 14 27.5 18 26.5 21 L21 26.5 C18 27.5 14 23 15.5 20.5 Z" fill="#2a5ae8" stroke="#0a1a90" stroke-width="0.8"/>
<ellipse cx="21.8" cy="21.8" rx="5" ry="2.9" transform="rotate(-45 21.8 21.8)" fill="#f6ee20"/></svg><div class="t lb" style="left:40px;top:252px;">指定修剪邊界</div><div class="ib" style="left:254px;top:240px;width:32px;height:31px"></div><svg style="left:254px;top:240px" width="32" height="31" viewBox="0 0 32 31" ><g fill="none" stroke="#0a0ad8" stroke-width="1.4"><path d="M6.7 6.2 L25.9 6.2 L25.9 12.5 L22 12.5"/><path d="M10.5 12.5 L6.7 12.5 L6.7 18.5 L12.5 18.5"/><path d="M25.9 20 L25.9 25.7 L6.7 25.7"/></g>
<path d="M8 10 L22.5 10 L27 20 L14 20" fill="#e8f8ff" fill-opacity="0.6" stroke="#e010e0" stroke-width="1.1"/>
<path d="M15 5.5 L20.5 24.5 M10 19 L12 13" stroke="#e010e0" stroke-width="1.1"/>
<circle cx="8.3" cy="9.3" r="1.6" fill="none" stroke="#e010e0" stroke-width="1"/>
<path d="M13.5 9.5 L22.5 19.5 M22 10 L13.5 19.5" stroke="#1a1010" stroke-width="2"/></svg><div class="ib ibd" style="left:288px;top:240px;width:32px;height:31px"></div><svg style="left:288px;top:240px" width="32" height="31" viewBox="0 0 32 31" ><defs><linearGradient id="fl1" x1="0" y1="0" x2="1" y2="0" gradientTransform="rotate(45 .5 .5)"><stop offset="0" stop-color="#e2e4ee"/><stop offset="1" stop-color="#b4b8cc"/></linearGradient></defs>
<path d="M5 8.5 C4.5 6.5 6.5 4.5 8.5 5 L20.5 15.5 L15.5 20.5 Z" fill="url(#fl1)" stroke="#c4c8d8" stroke-width="0.8"/>
<path d="M15.5 20.5 L20.5 15.5 C23 14 27.5 18 26.5 21 L21 26.5 C18 27.5 14 23 15.5 20.5 Z" fill="#c8cce0" stroke="#c4c8d8" stroke-width="0.8"/>
<ellipse cx="21.8" cy="21.8" rx="5" ry="2.9" transform="rotate(-45 21.8 21.8)" fill="#eef0d8"/></svg><div class="a" style="left:30px;top:284px;width:299px;height:23px;background:linear-gradient(#f6f6f6,#ffffff 40%)"></div><div class="a" style="left:30px;top:307px;width:299px;height:1px;background:#c9c9c9"></div><div class="a" style="left:30px;top:308px;width:299px;height:3px;background:linear-gradient(#e2e2e2,#f0f0f0)"></div><div class="t hd" style="left:38px;top:290px;">工具</div><svg style="left:312px;top:292px" width="11" height="8" viewBox="0 0 11 8" ><path d="M1 1 L5.5 6.5 L10 1" fill="none" stroke="#176a8c" stroke-width="2.2"/></svg><div class="a" style="left:30px;top:311px;width:299px;height:23px;background:linear-gradient(#f6f6f6,#ffffff 40%)"></div><div class="a" style="left:30px;top:334px;width:299px;height:1px;background:#c9c9c9"></div><div class="a" style="left:30px;top:335px;width:299px;height:3px;background:linear-gradient(#e2e2e2,#f0f0f0)"></div><div class="t hd" style="left:38px;top:317px;">刀軸</div><svg style="left:312px;top:319px" width="11" height="8" viewBox="0 0 11 8" ><path d="M1 1 L5.5 6.5 L10 1" fill="none" stroke="#176a8c" stroke-width="2.2"/></svg><div class="a" style="left:30px;top:338px;width:299px;height:355px;background:#fff"></div><div class="t hd" style="left:38px;top:343px;">刀軌設定</div><svg style="left:312px;top:345px" width="11" height="8" viewBox="0 0 11 8" ><path d="M1 7 L5.5 2 L10 7" fill="none" stroke="#176a8c" stroke-width="2.2"/></svg><div class="a" style="left:30px;top:693px;width:299px;height:1px;background:#c9c9c9"></div><div class="a" style="left:30px;top:694px;width:299px;height:3px;background:linear-gradient(#e0e0e0,#f0f0f0)"></div><div class="t lb" style="left:39px;top:374px;">方法</div><div class="dd" style="left:146px;top:368px;width:106px;height:23px;"></div><div class="t lb" style="left:150px;top:374px;font-size:13px;-webkit-text-stroke:0">METHOD</div><div class="tri" style="left:238px;top:377px;border-left-width:4px;border-right-width:4px;border-top:4px solid #111"></div><div class="ib" style="left:254px;top:368px;width:32px;height:31px"></div><svg style="left:254px;top:368px" width="32" height="31" viewBox="0 0 32 31" ><path d="M6.5 13.5 L6.5 19.5 L27 19.5 L27 13.5" fill="#e6f0fa" stroke="#0f4a9a" stroke-width="1.6"/>
<path d="M6.5 15 C10 12 13 18 17 16 C20 14.5 23 17 27 13.5" fill="none" stroke="#0f4a9a" stroke-width="1.4"/>
<path d="M6.5 21 L6.5 27.5 L27 27.5 L27 21" fill="#e6f0fa" stroke="#0f4a9a" stroke-width="1.6"/>
<path d="M6.5 24 L9 21.5 L11.5 24 L14 21.5 L16.5 24 L19 21.5 L21.5 24 L24 21.5 L27 24" fill="none" stroke="#0f4a9a" stroke-width="1.3"/>
<path d="M11.5 4 L12.8 9 L17.5 7.5 L14 11 L17 14.5 L12.5 13 L11 18 L10 13 L5.5 14 L9 11 L6 7.5 L10.5 9 Z" fill="#fff230" stroke="#4a90c0" stroke-width="0.5"/></svg><div class="ib ibd" style="left:288px;top:368px;width:32px;height:31px"></div><svg style="left:288px;top:368px" width="32" height="31" viewBox="0 0 32 31" ><path d="M19 5 C23 3 28 4 28.5 8 L24.5 9.5 L22.5 12.5 L26.5 13.5 C26 18 20 19.5 17 17.5 L10.5 24 C11.5 27 8.5 29 6 28.5 L8 25.5 L6 23.5 L3.5 25.5 C3 22.5 5 20 8.5 21 L15 14.5 C14 10.5 15.5 6.5 19 5 Z" fill="#d6d2c2" stroke="#c2bdac" stroke-width="1"/></svg><div class="t lb" style="left:39px;top:408px;">切削模式</div><div class="dd" style="left:190px;top:402px;width:130px;height:26px;"></div><svg style="left:194px;top:405px" width="20" height="20" viewBox="0 0 20 20" ><path d="M1.5 12 L1.5 2 L17 2 L17 12" fill="none" stroke="#222" stroke-width="2" stroke-dasharray="1 1"/>
<path d="M2.5 12 L2.5 4 L16 4 L16 12" fill="none" stroke="#111" stroke-width="1.3"/>
<path d="M2 12 L3.5 12 M15 12 L17 12" stroke="#111" stroke-width="1.3"/>
<path d="M6 14.5 L6 6 L13 6 L13 14.5" fill="none" stroke="#0a0af0" stroke-width="1.3"/>
<path d="M2 16.5 L17 16.5" stroke="#f010f0" stroke-width="1.2" stroke-dasharray="3 1 1 1"/></svg><div class="t lb" style="left:215px;top:408px;">輪廓加工</div><div class="tri" style="left:307px;top:413px;border-left-width:4px;border-right-width:4px;border-top:4px solid #111"></div><div class="t lb" style="left:39px;top:436px;">步距</div><div class="dd" style="left:190px;top:430px;width:130px;height:23px;"></div><div class="t lb" style="left:195px;top:436px;">% 刀具平直</div><div class="tri" style="left:307px;top:439px;border-left-width:4px;border-right-width:4px;border-top:4px solid #111"></div><div class="t lb" style="left:39px;top:460px;">平面直徑百分比</div><div class="tx" style="left:246px;top:455px;width:74px;height:21px"><div class="cl"><div class="ch" style="right:-5.5px;top:2.2px"><i><b>5</b></i><i><b>0</b></i><i><b>.</b></i><i><b>0</b></i><i><b>0</b></i><i><b>0</b></i><i><b>0</b></i><i><b>0</b></i></div></div></div><div class="t lb" style="left:39px;top:483px;">附加刀路</div><div class="tx" style="left:246px;top:478px;width:74px;height:21px"><div class="cl"><div class="ch" style="right:2.3px;top:2.2px"><i><b>0</b></i></div></div></div><div class="t lb" style="left:39px;top:507px;">公共每刀切削深度</div><div class="dd" style="left:190px;top:501px;width:130px;height:23px;"></div><div class="t lb" style="left:195px;top:507px;">恆定</div><div class="tri" style="left:307px;top:510px;border-left-width:4px;border-right-width:4px;border-top:4px solid #111"></div><div class="t lb" style="left:39px;top:531px;">最大距離</div><div class="tx" style="left:185px;top:526px;width:74px;height:21px"><div class="cl"><div class="ch" style="right:-5.5px;top:2.2px"><i><b>6</b></i><i><b>.</b></i><i><b>0</b></i><i><b>0</b></i><i><b>0</b></i><i><b>0</b></i><i><b>0</b></i></div></div></div><div class="dd" style="left:261px;top:526px;width:59px;height:22px;"></div><div class="t lb" style="left:267px;top:530px;font-size:13.5px;-webkit-text-stroke:0">mm</div><div class="tri" style="left:307px;top:535px;border-left-width:4px;border-right-width:4px;border-top:4px solid #111"></div><div class="t lb" style="left:39px;top:560px;">切削層</div><div class="ib" style="left:288px;top:552px;width:32px;height:31px"></div><svg style="left:288px;top:552px" width="32" height="31" viewBox="0 0 32 31" ><g stroke="#111" stroke-width="1.8"><path d="M5 6 L17 6 M5 9.5 L15 9.5 M5 13 L15 13 M5 17 L17 17 M5 20.5 L18 20.5"/></g>
<path d="M21.5 4.5 L27 4.5 L23.5 10 L26.5 10 L15.5 22 L19.5 13.5 L16.5 13.5 Z" fill="#f4de2a" stroke="#6a6a40" stroke-width="0.6"/></svg><div class="t lb" style="left:39px;top:595px;">切削參數</div><div class="ib" style="left:288px;top:586px;width:32px;height:31px"></div><svg style="left:288px;top:586px" width="32" height="31" viewBox="0 0 32 31" ><rect x="6.5" y="16.5" width="18.5" height="8" fill="#fff"/><clipPath id="hc1"><rect x="6.5" y="16.5" width="18.5" height="8"/></clipPath><path d="M-1.5 24.5 L6.5 16.5M2.5 24.5 L10.5 16.5M6.5 24.5 L14.5 16.5M10.5 24.5 L18.5 16.5M14.5 24.5 L22.5 16.5M18.5 24.5 L26.5 16.5M22.5 24.5 L30.5 16.5M26.5 24.5 L34.5 16.5M30.5 24.5 L38.5 16.5" stroke="#2a2a90" stroke-width="1.1" clip-path="url(#hc1)"/><rect x="6.5" y="16.5" width="18.5" height="8" fill="none" stroke="#111" stroke-width="1.5"/><path d="M8 12.7 L22 12.7" stroke="#1a2ad0" stroke-width="1.3"/><path d="M20.5 10.3 L24.5 12.7 L20.5 15.1 Z" fill="#1a2ad0"/></svg><div class="a" style="left:290px;top:587px;width:27px;height:27px;border:1px dotted #222;background:transparent"></div><div class="a" style="left:31px;top:585px;width:292px;height:32px;border:2px solid #b0191e;box-shadow:1px 2px 3px rgba(0,0,0,.25)"></div><div class="t lb" style="left:39px;top:628px;">非切削移動</div><div class="ib" style="left:288px;top:620px;width:32px;height:31px"></div><svg style="left:288px;top:620px" width="32" height="31" viewBox="0 0 32 31" ><rect x="6.5" y="16.5" width="18.5" height="8" fill="#fff"/><clipPath id="hc2"><rect x="6.5" y="16.5" width="18.5" height="8"/></clipPath><path d="M-1.5 24.5 L6.5 16.5M2.5 24.5 L10.5 16.5M6.5 24.5 L14.5 16.5M10.5 24.5 L18.5 16.5M14.5 24.5 L22.5 16.5M18.5 24.5 L26.5 16.5M22.5 24.5 L30.5 16.5M26.5 24.5 L34.5 16.5M30.5 24.5 L38.5 16.5" stroke="#2a2a90" stroke-width="1.1" clip-path="url(#hc2)"/><rect x="6.5" y="16.5" width="18.5" height="8" fill="none" stroke="#111" stroke-width="1.5"/><path d="M11 6.7 L22 6.7 M6 8.5 L6 13 M25.5 10 L25.5 15" stroke="#d01010" stroke-width="1.3"/><path d="M8 6.7 L11.5 4.5 L11.5 9 Z M3.8 12.5 L6 15.5 L8.2 12.5 Z M23.3 10.5 L25.5 7.5 L27.7 10.5 Z" fill="#d01010"/></svg><div class="t lb" style="left:39px;top:662px;">進給率和速度</div><div class="ib" style="left:288px;top:653px;width:32px;height:31px"></div><svg style="left:288px;top:653px" width="32" height="31" viewBox="0 0 32 31" ><defs><linearGradient id="fdg" x1="0" y1="0" x2="1" y2="0"><stop offset="0" stop-color="#2a40b0"/><stop offset=".5" stop-color="#8aa8f0"/><stop offset="1" stop-color="#2a40b0"/></linearGradient></defs>
<rect x="9.5" y="3" width="6" height="21" fill="url(#fdg)"/>
<path d="M9.5 6 L15.5 9 M9.5 10 L15.5 13 M9.5 16 L15.5 19 M9.5 20 L15.5 23" stroke="#1a2a80" stroke-width="0.8"/>
<path d="M9 11 C4 11.5 4 14.5 9 15 M16 15 C20 14.5 21 12 17 11" fill="none" stroke="#d81818" stroke-width="1.8"/>
<path d="M17 11 L19.5 10 L18.5 13 Z" fill="#d81818"/>
<path d="M14 26 C16 27 19 25 21 24.5 L21 22 L27 25 L21 28.5 L21 26.5 C19 27 16 28.5 14 28 Z" fill="#3a5ae8"/></svg><div class="a" style="left:30px;top:697px;width:299px;height:23px;background:linear-gradient(#f6f6f6,#ffffff 40%)"></div><div class="a" style="left:30px;top:720px;width:299px;height:1px;background:#c9c9c9"></div><div class="a" style="left:30px;top:721px;width:299px;height:3px;background:linear-gradient(#e2e2e2,#f0f0f0)"></div><div class="t hd" style="left:38px;top:703px;">機床控制</div><svg style="left:312px;top:705px" width="11" height="8" viewBox="0 0 11 8" ><path d="M1 1 L5.5 6.5 L10 1" fill="none" stroke="#176a8c" stroke-width="2.2"/></svg><div class="a" style="left:30px;top:724px;width:299px;height:23px;background:linear-gradient(#f6f6f6,#ffffff 40%)"></div><div class="a" style="left:30px;top:747px;width:299px;height:1px;background:#c9c9c9"></div><div class="a" style="left:30px;top:748px;width:299px;height:3px;background:linear-gradient(#e2e2e2,#f0f0f0)"></div><div class="t hd" style="left:38px;top:730px;">程式</div><svg style="left:312px;top:732px" width="11" height="8" viewBox="0 0 11 8" ><path d="M1 1 L5.5 6.5 L10 1" fill="none" stroke="#176a8c" stroke-width="2.2"/></svg><div class="a" style="left:30px;top:751px;width:299px;height:23px;background:linear-gradient(#f6f6f6,#ffffff 40%)"></div><div class="a" style="left:30px;top:774px;width:299px;height:1px;background:#c9c9c9"></div><div class="a" style="left:30px;top:775px;width:299px;height:3px;background:linear-gradient(#e2e2e2,#f0f0f0)"></div><div class="t hd" style="left:38px;top:757px;">敘述</div><svg style="left:312px;top:759px" width="11" height="8" viewBox="0 0 11 8" ><path d="M1 1 L5.5 6.5 L10 1" fill="none" stroke="#176a8c" stroke-width="2.2"/></svg><div class="a" style="left:30px;top:778px;width:299px;height:23px;background:linear-gradient(#f6f6f6,#ffffff 40%)"></div><div class="a" style="left:30px;top:801px;width:299px;height:1px;background:#c9c9c9"></div><div class="a" style="left:30px;top:802px;width:299px;height:3px;background:linear-gradient(#e2e2e2,#f0f0f0)"></div><div class="t hd" style="left:38px;top:784px;">選項</div><svg style="left:312px;top:786px" width="11" height="8" viewBox="0 0 11 8" ><path d="M1 1 L5.5 6.5 L10 1" fill="none" stroke="#176a8c" stroke-width="2.2"/></svg><div class="a" style="left:30px;top:805px;width:299px;height:29px;background:linear-gradient(#f6f6f6,#ffffff 40%)"></div><div class="t hd" style="left:38px;top:812px;">動作</div><svg style="left:312px;top:812px" width="11" height="8" viewBox="0 0 11 8" ><path d="M1 7 L5.5 2 L10 7" fill="none" stroke="#176a8c" stroke-width="2.2"/></svg><div class="a" style="left:366px;top:270px;width:312px;height:467px;background:#f0f0f0;border:1px solid #c9c9c9;border-right-color:#f0f0f0;border-left-color:#6e7a7e;border-top:none"></div><div class="a" style="left:366px;top:270px;width:312px;height:24px;background:#55a0bb"></div><svg style="left:0;top:0" width="1261" height="951"><polygon points="380.10,277.95 380.83,276.20 383.17,276.20 383.90,277.95 384.23,278.08 385.98,277.37 387.63,279.02 386.92,280.77 387.05,281.10 388.80,281.83 388.80,284.17 387.05,284.90 386.92,285.23 387.63,286.98 385.98,288.63 384.23,287.92 383.90,288.05 383.17,289.80 380.83,289.80 380.10,288.05 379.77,287.92 378.02,288.63 376.37,286.98 377.08,285.23 376.95,284.90 375.20,284.17 375.20,281.83 376.95,281.10 377.08,280.77 376.37,279.02 378.02,277.37 379.77,278.08" fill="#fff"/><circle cx="382" cy="283" r="3.2" fill="#55a0bb"/><rect x="380.9" y="281.9" width="2.2" height="2.2" fill="#fff"/></svg><div class="t " style="left:400px;top:276px;font-size:12.5px;color:#fff">切削參數</div><svg style="left:656px;top:277px" width="13" height="13" viewBox="0 0 13 13" ><path d="M1 1 L12 12 M12 1 L1 12" stroke="#fff" stroke-width="2"/></svg><div class="a" style="left:379px;top:304px;width:92px;height:26px;background:#efefef;border:1px solid #d6d6d6"></div><div class="t lb" style="left:413px;top:312px;">連線</div><div class="a" style="left:470px;top:304px;width:105px;height:26px;background:#efefef;border:1px solid #d6d6d6"></div><div class="t lb" style="left:498px;top:312px;">空間範圍</div><div class="a" style="left:574px;top:304px;width:91px;height:26px;background:#efefef;border:1px solid #d6d6d6"></div><div class="t lb" style="left:607px;top:312px;">更多</div><div class="a" style="left:379px;top:330px;width:95px;height:27px;background:#efefef;border:1px solid #d6d6d6"></div><div class="t lb" style="left:414px;top:338px;">策略</div><div class="a" style="left:571px;top:330px;width:94px;height:27px;background:#efefef;border:1px solid #d6d6d6"></div><div class="t lb" style="left:606px;top:338px;">轉角</div><div class="a" style="left:377px;top:356px;width:291px;height:321px;background:#fff;border:1px solid #c6c6c6"></div><div class="a" style="left:473px;top:328px;width:99px;height:30px;background:#fff;border:1px solid #c9c9c9;border-bottom:none"></div><div class="a" style="left:477px;top:330px;width:91px;height:26px;border:1px dotted #222"></div><div class="t lb" style="left:510px;top:338px;">餘量</div><div class="a" style="left:474px;top:356px;width:97px;height:2px;background:#fff"></div><div class="t hd" style="left:392px;top:366px;">餘量</div><svg style="left:644px;top:368px" width="11" height="8" viewBox="0 0 11 8" ><path d="M1 7 L5.5 2 L10 7" fill="none" stroke="#176a8c" stroke-width="2.2"/></svg><svg style="left:393px;top:393px" width="13" height="13" viewBox="0 0 13 13" ><rect x="0.5" y="0.5" width="12" height="12" fill="#fff" stroke="#333" stroke-width="1"/><path d="M2.5 6.5 L5.3 9.3 L10.5 3.5" fill="none" stroke="#222" stroke-width="1.4"/></svg><div class="t lb" style="left:411px;top:394px;">使底面餘量與側面餘量一致</div><div class="t lb" style="left:393px;top:418px;">零件側面餘量</div><div class="tx" style="left:552px;top:413px;width:74px;height:21px"><div class="cl"><div class="ch" style="right:-5.5px;top:2.2px"><i><b>0</b></i><i><b>.</b></i><i><b>0</b></i><i><b>0</b></i><i><b>0</b></i><i><b>0</b></i><i><b>0</b></i></div></div></div><div class="a" style="left:628px;top:413px;width:24px;height:24px;background:#f7f7f7;border:1px solid #c4c4c4"></div><svg style="left:628px;top:413px" width="24" height="24" viewBox="0 0 24 24" ><defs><linearGradient id="lg0" x1="0" y1="0" x2="1" y2="1"><stop offset="0" stop-color="#fff6a0"/><stop offset=".5" stop-color="#f2d030"/><stop offset="1" stop-color="#b08a10"/></linearGradient></defs><path d="M9 12 L9 8.5 C9 4.5 16 4.5 16 8.5 L16 12" fill="none" stroke="#b89a20" stroke-width="1.8"/><rect x="7" y="11.5" width="11" height="8.3" rx="0.8" fill="url(#lg0)" stroke="#a88410" stroke-width="0.7"/></svg><div class="t lb" style="left:393px;top:444px;">坯料餘量</div><div class="tx" style="left:578px;top:440px;width:74px;height:20px"><div class="cl"><div class="ch" style="right:-5.5px;top:1.7px"><i><b>0</b></i><i><b>.</b></i><i><b>0</b></i><i><b>0</b></i><i><b>0</b></i><i><b>0</b></i><i><b>0</b></i></div></div></div><div class="t lb" style="left:393px;top:467px;">檢查餘量</div><div class="tx" style="left:578px;top:463px;width:74px;height:20px"><div class="cl"><div class="ch" style="right:-5.5px;top:1.7px"><i><b>0</b></i><i><b>.</b></i><i><b>0</b></i><i><b>0</b></i><i><b>0</b></i><i><b>0</b></i><i><b>0</b></i></div></div></div><div class="t lb" style="left:393px;top:490px;">修剪餘量</div><div class="tx" style="left:578px;top:486px;width:74px;height:20px"><div class="cl"><div class="ch" style="right:-5.5px;top:1.7px"><i><b>0</b></i><i><b>.</b></i><i><b>0</b></i><i><b>0</b></i><i><b>0</b></i><i><b>0</b></i><i><b>0</b></i></div></div></div><div class="a" style="left:384px;top:514px;width:278px;height:1px;background:#cfcfcf"></div><div class="t hd" style="left:392px;top:528px;">公差</div><svg style="left:644px;top:530px" width="11" height="8" viewBox="0 0 11 8" ><path d="M1 7 L5.5 2 L10 7" fill="none" stroke="#176a8c" stroke-width="2.2"/></svg><div class="t lb" style="left:393px;top:557px;">內公差</div><div class="tx" style="left:552px;top:552px;width:74px;height:21px"><div class="cl"><div class="ch" style="right:-5.5px;top:2.2px"><i><b>0</b></i><i><b>.</b></i><i><b>0</b></i><i><b>0</b></i><i><b>1</b></i><i><b>0</b></i><i><b>0</b></i></div></div></div><div class="a" style="left:628px;top:552px;width:24px;height:24px;background:#f7f7f7;border:1px solid #c4c4c4"></div><svg style="left:628px;top:552px" width="24" height="24" viewBox="0 0 24 24" ><defs><linearGradient id="lg1" x1="0" y1="0" x2="1" y2="1"><stop offset="0" stop-color="#fff6a0"/><stop offset=".5" stop-color="#f2d030"/><stop offset="1" stop-color="#b08a10"/></linearGradient></defs><path d="M9 12.5 L9 9.5 C9 6.5 11.5 5.5 13.5 6 C16 6.5 17 8 18 10" fill="none" stroke="#b89a20" stroke-width="1.8"/><path d="M5 12 L15.5 12 L16 18.5 L14 19.5 L5.5 19.5 Z" fill="url(#lg1)" stroke="#a88410" stroke-width="0.7"/><path d="M14 12 L14 19.5" stroke="#c8a020" stroke-width="0.6"/></svg><div class="t lb" style="left:393px;top:583px;">外公差</div><div class="tx" style="left:552px;top:578px;width:74px;height:21px"><div class="cl"><div class="ch" style="right:-5.5px;top:2.2px"><i><b>0</b></i><i><b>.</b></i><i><b>0</b></i><i><b>0</b></i><i><b>1</b></i><i><b>0</b></i><i><b>0</b></i></div></div></div><div class="a" style="left:384px;top:607px;width:278px;height:1px;background:#cfcfcf"></div><div class="a" style="left:382px;top:516px;width:279px;height:97px;border:2px solid #b0191e;box-shadow:1px 2px 3px rgba(0,0,0,.25)"></div><svg style="left:517px;top:684px" width="10" height="6" viewBox="0 0 10 6" ><path d="M0 6 L5 0 L10 6 Z" fill="#111"/></svg><div class="a" style="left:373px;top:694px;width:299px;height:1px;background:#d6d6d6"></div><div class="a" style="left:549px;top:703px;width:54px;height:23px;background:#7ab7cf;border:1px solid #6aaac4"></div><div class="t " style="left:564px;top:708px;font-size:12px;color:#fff">確定</div><div class="a" style="left:608px;top:703px;width:54px;height:23px;background:#e1e1e1;border:1px solid #adadad"></div><div class="t lb" style="left:623px;top:708px;">取消</div></body></html>
